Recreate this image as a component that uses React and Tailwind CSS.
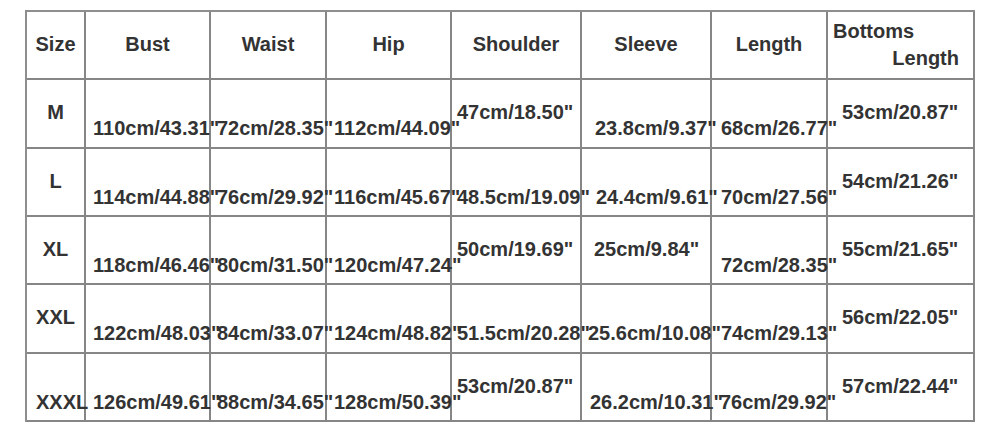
const TOP = "pt-[22px]";
const LOW = "pt-[37.5px]";

const header = ["Size", "Bust", "Waist", "Hip", "Shoulder", "Sleeve", "Length"];

// each cell: [text, vertical level, left padding / alignment]
const rows = [
  [
    ["M", TOP, "items-center"],
    ['110cm/43.31"', LOW, "pl-[7px]"],
    ['72cm/28.35"', LOW, "pl-[6px]"],
    ['112cm/44.09"', LOW, "pl-[7px]"],
    ['47cm/18.50"', TOP, "pl-[5px]"],
    ['23.8cm/9.37"', LOW, "pl-[13px]"],
    ['68cm/26.77"', LOW, "pl-[9px]"],
    ['53cm/20.87"', TOP, "pl-[14px]"],
  ],
  [
    ["L", TOP, "items-center"],
    ['114cm/44.88"', LOW, "pl-[7px]"],
    ['76cm/29.92"', LOW, "pl-[6px]"],
    ['116cm/45.67"', LOW, "pl-[7px]"],
    ['48.5cm/19.09"', LOW, "pl-[5px]"],
    ['24.4cm/9.61"', LOW, "pl-[14px]"],
    ['70cm/27.56"', LOW, "pl-[9px]"],
    ['54cm/21.26"', TOP, "pl-[14px]"],
  ],
  [
    ["XL", TOP, "items-center"],
    ['118cm/46.46"', LOW, "pl-[7px]"],
    ['80cm/31.50"', LOW, "pl-[6px]"],
    ['120cm/47.24"', LOW, "pl-[7px]"],
    ['50cm/19.69"', TOP, "pl-[5px]"],
    ['25cm/9.84"', TOP, "pl-[12px]"],
    ['72cm/28.35"', LOW, "pl-[9px]"],
    ['55cm/21.65"', TOP, "pl-[14px]"],
  ],
  [
    ["XXL", TOP, "items-center"],
    ['122cm/48.03"', LOW, "pl-[7px]"],
    ['84cm/33.07"', LOW, "pl-[6px]"],
    ['124cm/48.82"', LOW, "pl-[7px]"],
    ['51.5cm/20.28"', LOW, "pl-[5px]"],
    ['25.6cm/10.08"', LOW, "pl-[6px]"],
    ['74cm/29.13"', LOW, "pl-[9px]"],
    ['56cm/22.05"', TOP, "pl-[14px]"],
  ],
  [
    ["XXXL", LOW, "pl-[9px]"],
    ['126cm/49.61"', LOW, "pl-[7px]"],
    ['88cm/34.65"', LOW, "pl-[6px]"],
    ['128cm/50.39"', LOW, "pl-[7px]"],
    ['53cm/20.87"', TOP, "pl-[5px]"],
    ['26.2cm/10.31"', LOW, "pl-[8px]"],
    ['76cm/29.92"', LOW, "pl-[8px]"],
    ['57cm/22.44"', TOP, "pl-[14px]"],
  ],
];

const cellBase = "flex flex-col whitespace-nowrap border-r-2 border-b-2 border-[#868686]";

export default function App() {
  return (
    <div className="h-[432px] w-[1000px] bg-white pt-[10px] pl-[25px]">
      <div
        className="grid w-[950px] grid-cols-[59px_125px_116px_125px_130px_130px_116px_147px] grid-rows-[68px_69px_68px_68px_69px_68px] border-l-2 border-t-2 border-[#8e8e8e] text-[20px] font-bold text-[#333333]"
        style={{ fontFamily: '"Liberation Sans", Arial, sans-serif' }}
      >
        {header.map((h) => (
          <div key={h} className={`${cellBase} ${TOP} items-center leading-none`}>
            {h}
          </div>
        ))}
        <div className={`${cellBase} pt-[6px] pl-[5px] pr-[14px] leading-[27px]`}>
          <span>Bottoms</span>
          <span className="text-right">Length</span>
        </div>

        {rows.map((row, r) =>
          row.map(([text, level, align], c) => (
            <div key={`${r}-${c}`} className={`${cellBase} ${level} ${align} leading-none`}>
              <span>{text}</span>
            </div>
          )),
        )}
      </div>
    </div>
  );
}
